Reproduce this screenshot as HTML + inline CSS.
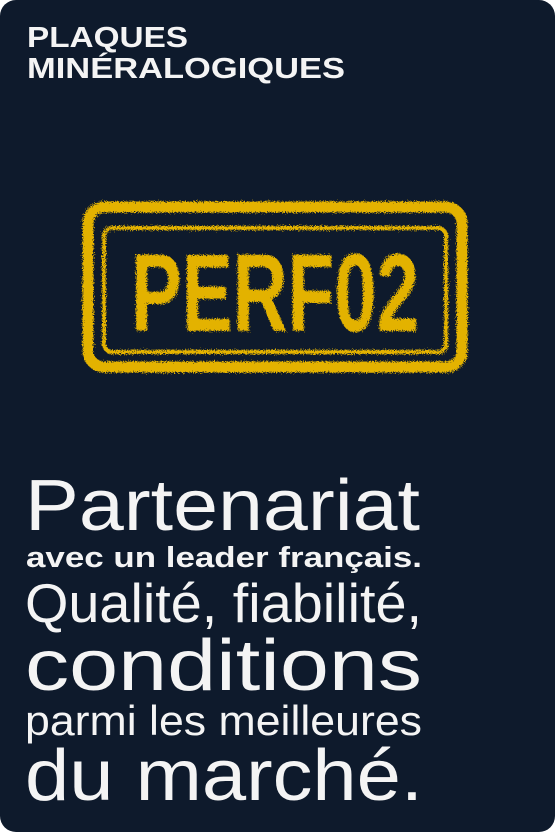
<!DOCTYPE html>
<html><head><meta charset="utf-8"><style>
html,body{margin:0;padding:0;background:#fff;}
.card{position:relative;width:555px;height:832px;background:#0e1a2c;border-radius:16px;overflow:hidden;}
svg text{font-family:"Liberation Sans",sans-serif;fill:#f4f4f4;}
</style></head><body>
<div class="card">
<svg width="555" height="832" style="position:absolute;left:0;top:0">
<defs><filter id="f"><feTurbulence type="fractalNoise" baseFrequency="0.9" numOctaves="2" result="n"/><feDisplacementMap in="SourceGraphic" in2="n" scale="7"/></filter></defs>
<text x="27" y="47" font-size="29" font-weight="bold" textLength="161" lengthAdjust="spacingAndGlyphs">PLAQUES</text>
<text x="27" y="78" font-size="29" font-weight="bold" textLength="318" lengthAdjust="spacingAndGlyphs">MINÉRALOGIQUES</text>
<g filter="url(#f)" fill="none" stroke="#e3b200">
<rect x="88" y="207" width="374" height="160" rx="16" stroke-width="11"/>
<rect x="104" y="228" width="342" height="124" rx="8" stroke-width="4"/>
</g>
<text x="275" y="331" text-anchor="middle" style="fill:#e3b200" font-weight="bold" font-size="110" textLength="288" lengthAdjust="spacingAndGlyphs" filter="url(#f)">PERF02</text>
<text x="25" y="530" font-size="72" textLength="395" lengthAdjust="spacingAndGlyphs">Partenariat</text>
<text x="26" y="567" font-size="29" font-weight="bold" textLength="396" lengthAdjust="spacingAndGlyphs">avec un leader français.</text>
<text x="25" y="622" font-size="55" textLength="397" lengthAdjust="spacingAndGlyphs">Qualité, fiabilité,</text>
<text x="25" y="690" font-size="72" textLength="397" lengthAdjust="spacingAndGlyphs">conditions</text>
<text x="25" y="735" font-size="42" textLength="397" lengthAdjust="spacingAndGlyphs">parmi les meilleures</text>
<text x="25" y="800" font-size="72" textLength="398" lengthAdjust="spacingAndGlyphs">du marché.</text>
</svg>
</div>
</body></html>
